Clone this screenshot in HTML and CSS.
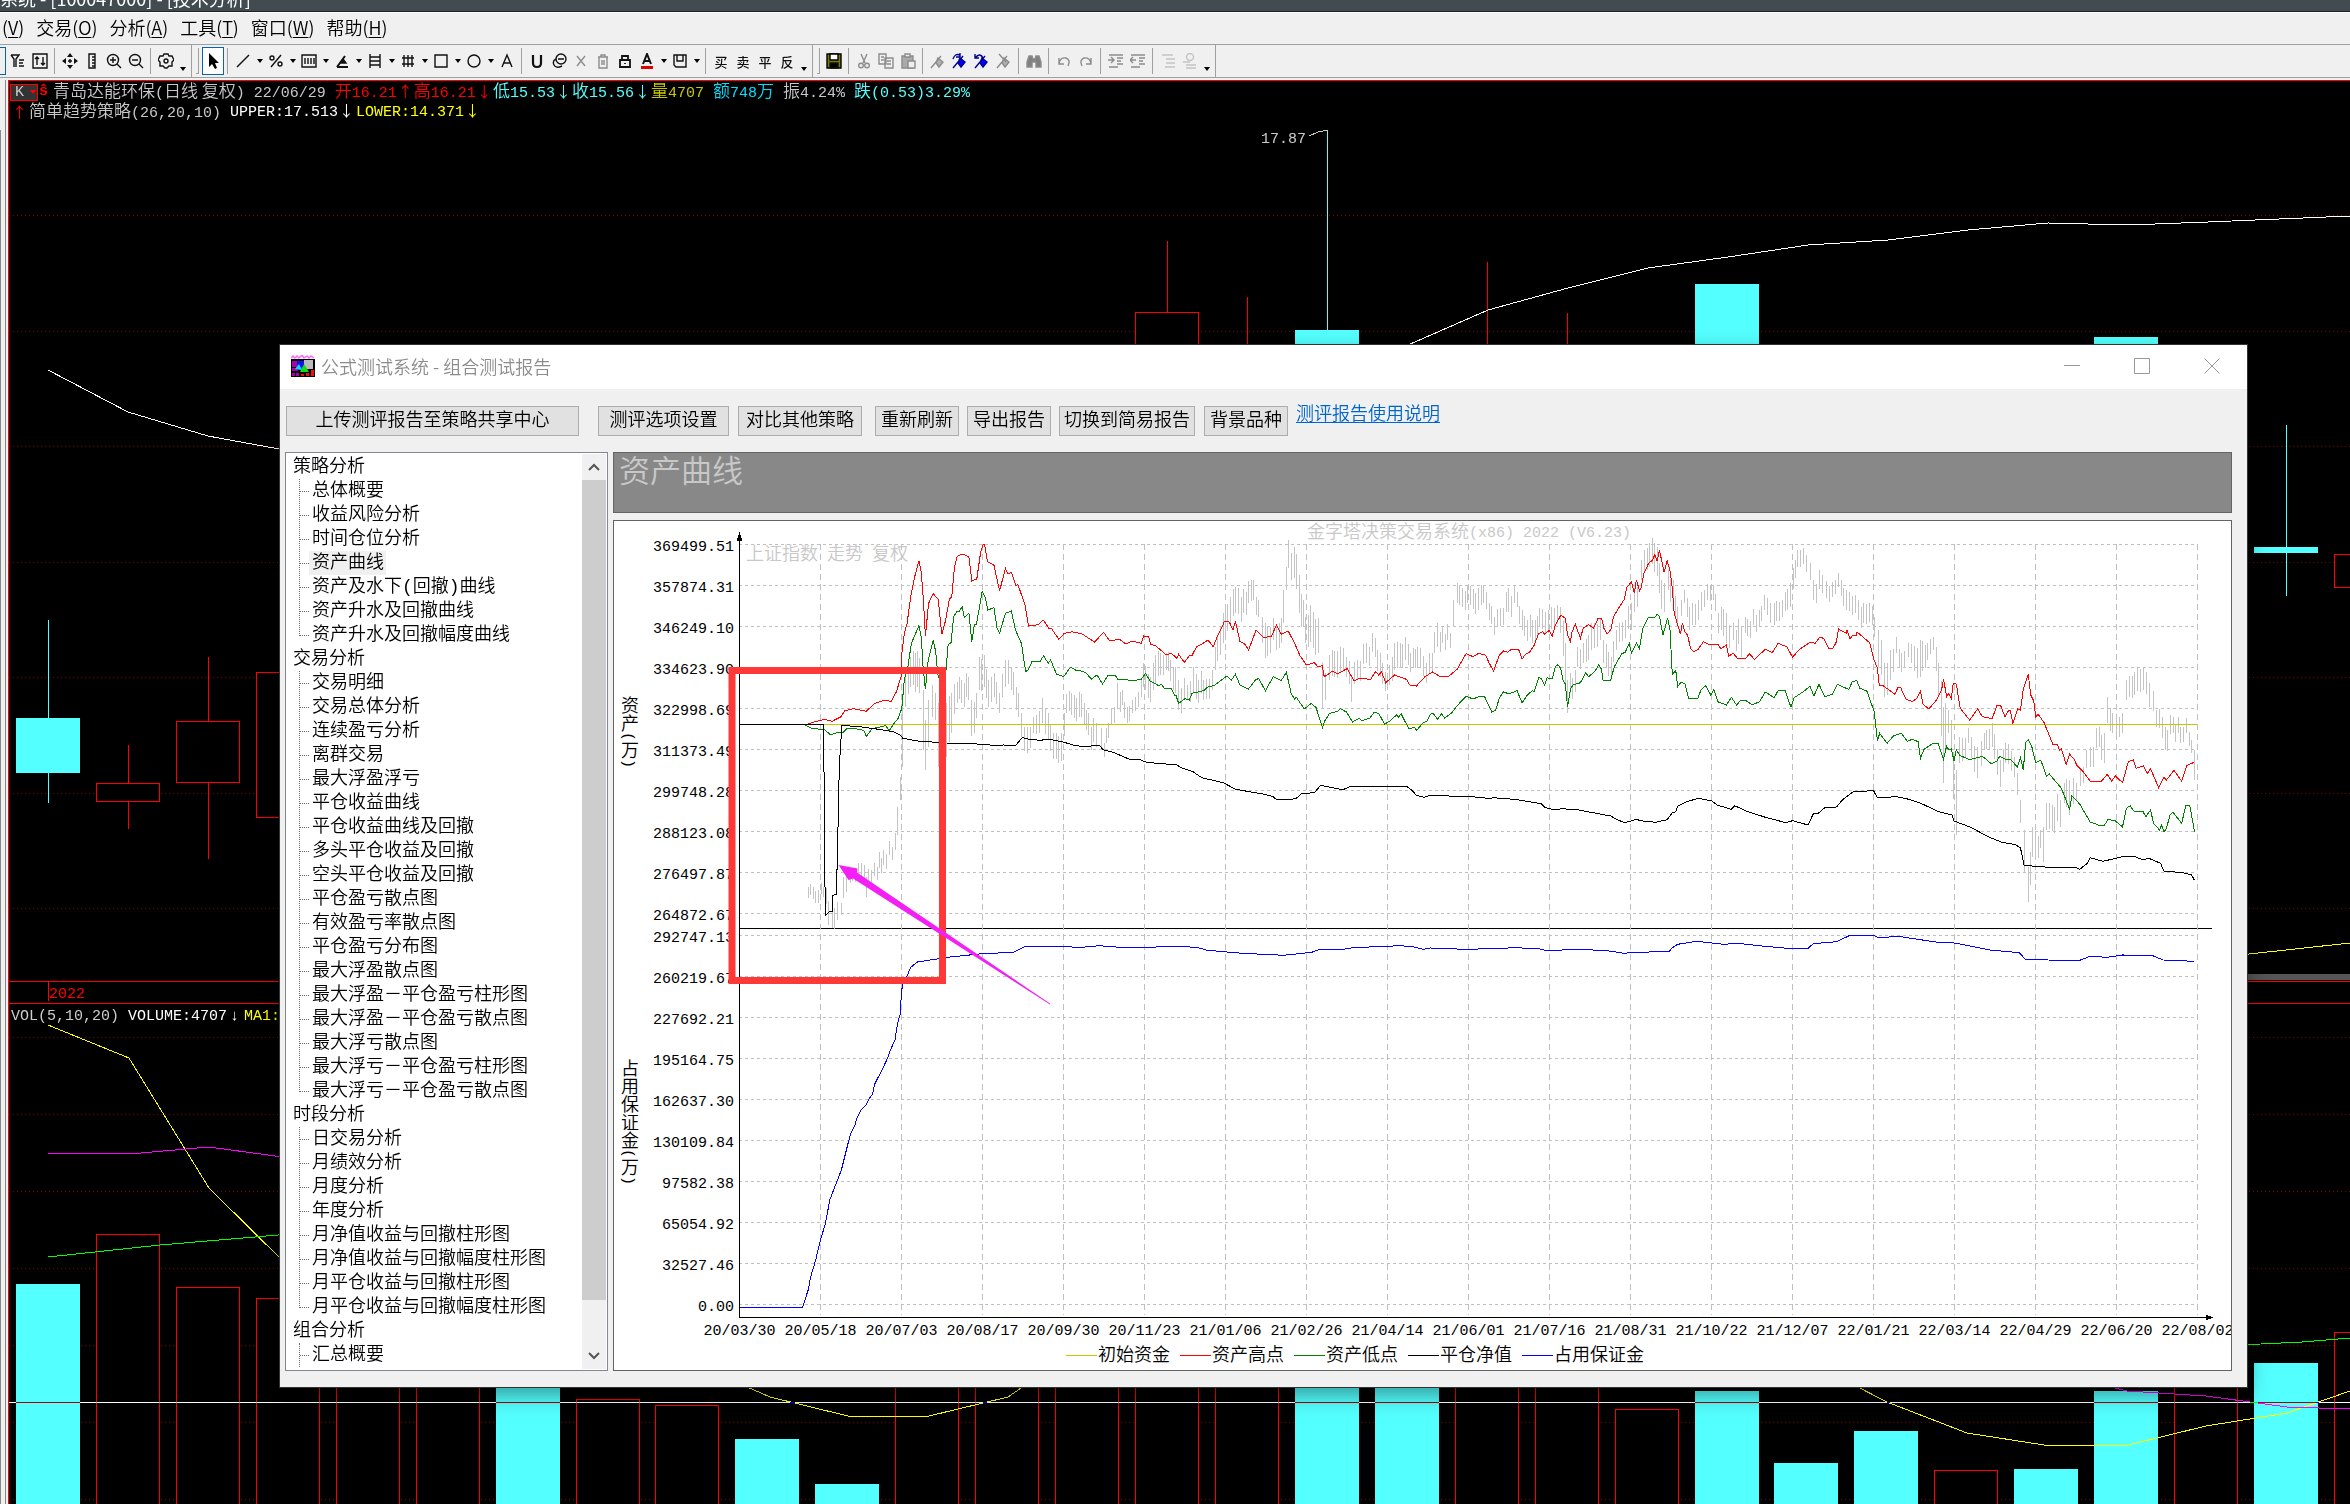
FILE: index.html
```html
<!DOCTYPE html>
<html lang="zh-CN">
<head>
  <meta charset="utf-8">
  <title>公式测试系统 - 组合测试报告</title>
  <link rel="stylesheet" href="styles.css">
</head>
<body>
<div class="app">
  <header class="caption">系统 - [100047000] - [技术分析]</header>
  <nav class="menu">
    <a href="#">(<u>V</u>)</a>
    <a href="#">交易(<u>O</u>)</a>
    <a href="#">分析(<u>A</u>)</a>
    <a href="#">工具(<u>T</u>)</a>
    <a href="#">窗口(<u>W</u>)</a>
    <a href="#">帮助(<u>H</u>)</a>
  </nav>
  <div class="toolbar" id="toolbar"></div>

  <main class="quote">
    <svg class="kline" id="kline" viewBox="0 80 2350 1424" preserveAspectRatio="none"></svg>
    <div class="info">
      <button class="ktype">K<i></i></button><span class="sup">ŝ</span>
      <p><span class="zh">青岛达能环保</span>(<span class="zh">日线 复权</span>) 22/06/29</p>
      <p class="up"><span class="zh">开</span>16.21<span class="ar">↑</span><span class="zh">高</span>16.21<span class="ar">↓</span></p>
      <p class="down"><span class="zh">低</span>15.53<span class="ar">↓</span><span class="zh">收</span>15.56<span class="ar">↓</span></p>
      <p class="vol"><span class="zh">量</span>4707</p>
      <p class="amt"><span class="zh">额</span>748<span class="zh">万</span></p>
      <p><span class="zh">振</span>4.24%</p>
      <p class="down"><span class="zh">跌</span>(0.53)3.29%</p>
    </div>
    <div class="info second">
      <span class="up ar">↑</span>
      <p><span class="zh">简单趋势策略</span>(26,20,10)</p>
      <p class="white">UPPER:17.513<span class="ar">↓</span></p>
      <p class="yellow">LOWER:14.371<span class="ar">↓</span></p>
    </div>
  </main>

  <section class="dialog">
    <div class="dlg-title">
      <svg class="dlg-icon" viewBox="0 0 24 22">
        <path d="M0 3l2-2 2 2 2-2 2 2 3-3 2 3 3-2 2 2 2-2 3 2" fill="none" stroke="#f6f" stroke-width="1.5"/>
        <rect y="4" width="24" height="18" fill="#000"/>
        <path d="M1 6h7v6H1zM1 13h6v3H1zM1 18h3v3H1zM5 18h3v3H5z" fill="#a0a"/>
        <path d="M13 5h9v9h-9z" fill="#bbb"/>
        <path d="M6 6h7v9H6z" fill="#11e"/>
        <path d="M4 14l4-5 3 6z" fill="#0df"/>
        <path d="M9 17l4-8 5 8z" fill="#1d1"/>
        <path d="M10 19h3v2h-3zM15 18h3v3h-3zM20 15h3v6h-3z" fill="#e11"/>
      </svg>
      <span class="dlg-name">公式测试系统 - 组合测试报告</span>
      <button class="win" aria-label="最小化"><svg viewBox="0 0 16 16"><path d="M0 7.500h16"/></svg></button>
      <button class="win" aria-label="最大化"><svg viewBox="0 0 16 16"><path d="M.5 .5h15v15H.5z"/></svg></button>
      <button class="win" aria-label="关闭"><svg viewBox="0 0 16 16"><path d="M.5 .5l15 15M15.5 .5l-15 15"/></svg></button>
    </div>
    <div class="dlg-bar">
      <button class="wide">上传测评报告至策略共享中心</button>
      <button class="b131">测评选项设置</button>
      <button class="b124">对比其他策略</button>
      <button class="b84">重新刷新</button>
      <button class="b84">导出报告</button>
      <button class="b136">切换到简易报告</button>
      <button class="b84">背景品种</button>
      <a href="#">测评报告使用说明</a>
    </div>
    <div class="dlg-body">
      <div class="tree">
        <ul class="nodes">
          <li>策略分析
            <ul>
              <li>总体概要</li><li>收益风险分析</li><li>时间仓位分析</li>
              <li><span class="sel">资产曲线</span></li>
              <li>资产及水下(回撤)曲线</li><li>资产升水及回撤曲线</li><li>资产升水及回撤幅度曲线</li>
            </ul>
          </li>
          <li>交易分析
            <ul>
              <li>交易明细</li><li>交易总体分析</li><li>连续盈亏分析</li><li>离群交易</li>
              <li>最大浮盈浮亏</li><li>平仓收益曲线</li><li>平仓收益曲线及回撤</li>
              <li>多头平仓收益及回撤</li><li>空头平仓收益及回撤</li><li>平仓盈亏散点图</li>
              <li>有效盈亏率散点图</li><li>平仓盈亏分布图</li><li>最大浮盈散点图</li>
              <li>最大浮盈－平仓盈亏柱形图</li><li>最大浮盈－平仓盈亏散点图</li>
              <li>最大浮亏散点图</li><li>最大浮亏－平仓盈亏柱形图</li><li>最大浮亏－平仓盈亏散点图</li>
            </ul>
          </li>
          <li>时段分析
            <ul>
              <li>日交易分析</li><li>月绩效分析</li><li>月度分析</li><li>年度分析</li>
              <li>月净值收益与回撤柱形图</li><li>月净值收益与回撤幅度柱形图</li>
              <li>月平仓收益与回撤柱形图</li><li>月平仓收益与回撤幅度柱形图</li>
            </ul>
          </li>
          <li>组合分析
            <ul class="more"><li>汇总概要</li></ul>
          </li>
        </ul>
        <div class="scroll">
          <button aria-label="向上"><svg viewBox="0 0 12 10"><path d="M1 8l5-5 5 5"/></svg></button>
          <div class="thumb"></div>
          <button aria-label="向下"><svg viewBox="0 0 12 10"><path d="M1 2l5 5 5-5"/></svg></button>
        </div>
      </div>
      <div class="report">
        <h1>资产曲线</h1>
        <div class="plot">
          <svg id="equity" viewBox="614 521 1617 849" preserveAspectRatio="none"></svg>
        </div>
      </div>
    </div>
  </section>

  <svg class="marks" viewBox="0 0 2350 1504" preserveAspectRatio="none">
    <rect x="732" y="670.5" width="210.500" height="310" fill="none" stroke="#ff3838" stroke-width="7"/>
    <path d="M838.600 865L857.500 868.500 857 872.500 1050 1003.500 1050 1004.500 853 878.500 848.500 880z" fill="#f41ff4"/>
  </svg>
</div>
<script src="script.js"></script>
</body>
</html>
```
FILE: styles.css
```css
* { box-sizing: border-box; }

body {
  margin: 0;
  background: #000;
  font-family: "Liberation Mono", "Noto Sans CJK SC", monospace;
  font-size: 18px;
  overflow: hidden;
}

button { font: inherit; color: inherit; padding: 0; border: 0; background: none; }
p, h1, ul { margin: 0; padding: 0; list-style: none; }

.app {
  position: relative;
  display: flex;
  flex-direction: column;
  height: 100vh;
}

/* main window */
.caption {
  display: flex;
  align-items: flex-end;
  height: 12px;
  padding-bottom: 3px;
  overflow: hidden;
  background: #414b50;
  border-bottom: 1px solid #1c2224;
  color: #fff;
  line-height: 20px;
  font-family: "Noto Sans CJK SC", sans-serif;
  white-space: pre;
  flex: none;
}
.menu {
  display: flex;
  gap: 12px;
  height: 32px;
  flex: none;
  align-items: center;
  padding: 0 0 4px 2px;
  background: #f0f0f0;
  border-top: 1px solid #fff;
  font-family: "Noto Sans CJK SC", sans-serif;
  font-weight: 350;
}
.menu a { color: #000; text-decoration: none; white-space: nowrap; }
.menu u { text-underline-offset: 2px; }

.toolbar {
  display: flex;
  height: 36px;
  flex: none;
  background: #f0f0f0;
  border-top: 1px solid #a0a0a0;
}
.band {
  display: flex;
  align-items: center;
  height: 33px;
  padding-right: 2px;
  border-right: 1px solid #a0a0a0;
  border-bottom: 1px solid #a0a0a0;
}
.fill { flex: 1; height: 33px; border-bottom: 1px solid #a0a0a0; }
.grip { width: 3px; height: 26px; margin: 0 3px 0 4px; border-right: 1px solid #a0a0a0; border-bottom: 1px solid #a0a0a0; }
.sep { width: 1px; height: 26px; margin: 0 4px 0 3px; background: #a0a0a0; }
.tool { display: flex; align-items: center; justify-content: center; width: 22px; height: 28px; color: #111; }
.tool svg { width: 16px; height: 16px; fill: none; stroke: currentColor; stroke-width: 1.400; }
.tool.off { color: #8c8c8c; }
.tool.dim { color: #c4c4c4; }
.tool.on { border: 1px solid #0a64ad; background: #fff; }
.tool.cut { width: 6px; margin-right: 1px; border: 1px solid #0a64ad; border-left: 0; }
.tool.zi { font: 500 13px "Noto Sans CJK SC", sans-serif; }
.drop { width: 11px; height: 28px; display: flex; align-items: center; justify-content: center; }
.drop::after { content: ""; border: 3px solid transparent; border-top: 4px solid #000; border-bottom: 0; }
.drop.over { width: 12px; align-items: flex-end; padding-bottom: 4px; }

/* quote area */
.quote {
  position: relative;
  flex: 1;
  padding: 2px 0 0 8px;
  background: #000;
  overflow: hidden;
}
.kline { position: absolute; inset: 0; width: 100%; height: 100%; }
.info {
  position: relative;
  display: flex;
  align-items: center;
  gap: 9px;
  height: 20px;
  padding-left: 2px;
  color: #c8c8c8;
  font-size: 15px;
  line-height: 20px;
  white-space: pre;
}
.info p { flex: none; height: 20px; }
.info .zh { font-family: "Noto Sans CJK SC", sans-serif; font-size: 17px; font-weight: 350; line-height: 16px; }
.info .ar { display: inline-block; width: 17px; text-align: center; font-family: "Noto Sans CJK SC", sans-serif; font-size: 15px; line-height: 16px; }
.info .up + .down { margin-left: -9px; }
.info .down + .vol { margin-left: -9px; }
.info.second { padding-left: 3px; }
.info.second .up { margin-right: -8px; }
.info.second .white { margin-right: -8px; }
.ktype { display: flex; align-items: center; width: 28px; height: 17px; padding-left: 4px; gap: 6px; background: #333; border: 1px solid red; color: #ccc; line-height: 15px; }
.ktype i { border: 3px solid transparent; border-top: 4px solid red; border-bottom: 0; }
.sup { color: red; font-weight: bold; margin: 0 -4px 0 -8px; }
.up { color: red; }
.down { color: #54ffff; }
.vol { color: #c8c800; }
.amt { color: #00e0ff; }
.white { color: #fff; }
.yellow { color: #ff0; }

/* report dialog */
.dialog {
  position: absolute;
  left: 280px;
  top: 345px;
  right: 103px;
  bottom: 117px;
  display: flex;
  flex-direction: column;
  background: #f0f0f0;
  outline: 1px solid #333;
  box-shadow: 0 8px 20px rgba(0, 0, 0, .4);
  font-weight: 350;
}
.dlg-title { display: flex; align-items: center; height: 44px; flex: none; padding: 0 0 2px 11px; background: #fff; color: #8c8c8c; }
.dlg-icon { width: 24px; height: 22px; margin-right: 6px; }
.dlg-name { flex: 1; font-family: "Noto Sans CJK SC", sans-serif; }
.win { display: flex; align-items: center; justify-content: center; width: 70px; height: 44px; }
.win svg { width: 16px; height: 16px; fill: none; stroke: #999; }

.dlg-bar { display: flex; height: 63px; flex: none; padding: 17px 6px 0; }
.dlg-bar button { height: 30px; margin-right: 8px; background: #e1e1e1; border: 1px solid #adadad; white-space: nowrap; line-height: 28px; }
.dlg-bar .wide { width: 293px; margin-right: 19px; }
.dlg-bar .b131 { width: 131px; margin-right: 9px; }
.dlg-bar .b124 { width: 124px; margin-right: 13px; }
.dlg-bar .b84 { width: 84px; }
.dlg-bar .b136 { width: 136px; margin-right: 9px; }
.dlg-bar a { color: #0066cc; height: 19px; line-height: 18px; text-underline-offset: 2px; }

.dlg-body { display: flex; flex: 1; min-height: 0; gap: 5px; padding: 0 15px 16px 5px; }
.tree { display: flex; width: 323px; flex: none; padding: 1px; background: #fff; border: 1px solid #828790; }
.nodes { flex: 1; overflow: hidden; padding: 1px 0 0 6px; line-height: 24px; white-space: nowrap; }
.nodes ul { position: relative; padding-left: 19px; }
.nodes ul::before { content: ""; position: absolute; left: 6px; top: 0; bottom: 11px; border-left: 1px dotted #666; }
.nodes ul.more::before { bottom: 0; }
.nodes ul li { position: relative; height: 24px; }
.nodes ul li::before { content: ""; position: absolute; left: -12px; top: 12px; width: 9px; border-top: 1px dotted #666; }
.sel { display: inline-block; height: 24px; margin-left: -3px; padding: 0 2px 0 3px; background: #f0f0f0; }
.scroll { display: flex; flex-direction: column; width: 24px; background: #f0f0f0; }
.scroll button { display: flex; align-items: center; justify-content: center; height: 26px; flex: none; }
.scroll svg { width: 12px; height: 10px; fill: none; stroke: #555; stroke-width: 2; }
.scroll .thumb { height: 820px; flex: 0 1 auto; background: #cdcdcd; }
.scroll button:last-child { margin-top: auto; }

.report { display: flex; flex-direction: column; flex: 1; gap: 7px; min-width: 0; }
.report h1 { height: 61px; flex: none; padding: 3px 5px; background: #888; border: 1px solid #646464; color: #c8c8c8; font-size: 31px; line-height: 36px; font-weight: 350; }
.plot { flex: 1; min-height: 0; background: #fff; border: 1px solid #646464; }
.plot svg { display: block; width: 100%; height: 100%; }
svg text { font-size: 15px; dominant-baseline: central; white-space: pre; }
svg .zh { font-size: 18px; }
.kline, .plot svg { shape-rendering: crispEdges; }
.grid { stroke: #c0c0c0; stroke-dasharray: 3 3; }
.grid.v { stroke-dasharray: 6 4; }
.vert { writing-mode: vertical-rl; }
.line { fill: none; stroke-width: 1; }
.cross { mix-blend-mode: difference; }

/* hand drawn callout */
.marks { position: absolute; inset: 0; width: 100%; height: 100%; pointer-events: none; }
```
FILE: script.js
```js
// ---------- toolbar ----------
var flag = '<path d="M1 15L11 3M8 5l5 4-4 5-3-4z"';
var icons = {
  filter: '<path d="M1 2h8L6 6v8M4 14V6L1 2M9 7h5M9 10h4M9 13h5"/>',
  updown: '<path d="M1 1h14v14H1zM5 12V4M3 6l2-2 2 2M11 4v8M9 10l2 2 2-2"/>',
  move: '<path d="M8 0l3 4H5zM8 16l3-4H5zM0 8l4-3v6zM16 8l-4-3v6z" fill="currentColor" stroke="none"/><path d="M6 8h4M8 6v4"/>',
  ruler: '<path d="M5 1h6v14H5zM8 4h3M8 7h3M8 10h3M8 13h3"/>',
  zin: '<circle cx="7" cy="7" r="5.5"/><path d="M4 7h6M7 4v6M11 11l4 4"/>',
  zout: '<circle cx="7" cy="7" r="5.5"/><path d="M4 7h6M11 11l4 4"/>',
  gear: '<path d="M6 1h4l1 2 3 0 2 4-2 2 0 4-3 0-2 2H7l-2-2-3 0 0-4L0 7l2-4h3z"/><circle cx="8" cy="8" r="2"/>',
  cursor: '<path d="M4 0v14l3-3 3 5 2-1-2-5h4z" fill="#000" stroke="none"/>',
  line: '<path d="M2 14L14 2"/>',
  pct: '<path d="M3 14L13 2"/><circle cx="4" cy="5" r="2"/><circle cx="12" cy="11" r="2"/>',
  bars: '<path d="M1 2h14v12H1zM4 5v6M7 5v6M10 5v6M13 5v6"/>',
  angle: '<path d="M3 14h11M3 14L11 3" stroke-width="2"/><path d="M6 10l6 0-3-4" fill="currentColor"/>',
  rows: '<path d="M3 1v14M13 1v14M3 4h10M3 8h10M3 12h10"/>',
  hash: '<path d="M4 2v12M8 2v12M12 2v12M2 5h12M2 11h12"/>',
  box: '<path d="M2 2h12v12H2z"/>',
  circ: '<circle cx="8" cy="8" r="6"/>',
  A: '<path d="M3 14L8 2l5 12M5 10h6"/>',
  magnet: '<path d="M4 2v8q0 4 4 4t4-4V2" stroke-width="2.2"/>',
  rings: '<circle cx="10" cy="6" r="5"/><path d="M7 6h6M11 13q-6 3-8-1-2-4 2-6"/>',
  x: '<path d="M4 3l8 10M12 3L4 13"/>',
  trash: '<path d="M3 4h10M6 4V2h4v2M4 4v11h8V4M7 7v5M9 7v5"/>',
  lock: '<path d="M3 7h10v7H3zM5 7V3h6v4M8 10v1" stroke-width="1.8"/>',
  fontc: '<path d="M4 11L8 1l4 10M6 8h4" stroke-width="2"/><path d="M2 14.500h12" stroke="#e00000" stroke-width="3"/>',
  disk: '<path d="M2 2h12v12H4l-2-2zM5 2v6h6V2"/>',
  save: '<path d="M1 1h14v14H1z" fill="#7a7a00" stroke="#000"/><path d="M4 1h8v6H4z" fill="#fff" stroke="#000"/><path d="M4 10h8v5H4z" fill="#000"/>',
  scissors: '<path d="M5 1l4 9M11 1L7 10"/><circle cx="5" cy="12.5" r="2.3"/><circle cx="11" cy="12.5" r="2.3"/>',
  copy: '<path d="M1 1h7v10H1zM3 4h3M3 7h3M7 5h8v10H7zM9 8h4M9 11h4"/>',
  paste: '<path d="M2 3h11v12H2z" fill="#aaa"/><path d="M5 1h5v3H5zM8 8h7v7H8z" fill="#eee"/>',
  flag0: flag + ' fill="#b0b0b0"/>',
  flagn: flag + ' fill="#00f" stroke="#000090"/><path d="M1 6q2-6 7-4M8 0v4H4" stroke="#000090"/>',
  flagp: flag + ' fill="#00f" stroke="#000090"/><path d="M1 1v4h4M1 5q5-6 8 0" stroke="#000090"/>',
  flagx: flag + ' fill="#b0b0b0"/><path d="M3 1l7 8"/>',
  find: '<path d="M3 3h3l1 3h2l1-3h3l2 6v5h-5V9H6v5H1V9z" fill="#808080"/>',
  undo: '<path d="M3 5v6h5M3 11q1-7 7-6 5 2 2 8"/>',
  redo: '<path d="M13 5v6H8M13 11q-1-7-7-6-5 2-2 8"/>',
  ind: '<path d="M1 2h14M9 5h6M9 8h4M9 11h6M1 14h9M0 7h6M3 4l3 3-3 3"/>',
  outd: '<path d="M1 2h14M9 5h6M9 8h4M9 11h6M1 14h9M0 7h6M3 4L0 7l3 3"/>',
  list: '<path d="M2 2h11M6 6h9M6 10h9M5 14h10"/>',
  seek: '<circle cx="8" cy="4" r="3.5"/><path d="M1 9h7M4 12h10M4 15h10"/>'
};
// "|" separator, "v" drop arrow, "V" overflow arrow, a prefix of - or = greys the tool out
var bands = [
  'cut filter updown | move ruler zin zout | gear V',
  '+cursor | line v pct v bars v angle v rows v hash v box v circ v A | magnet rings -x -trash lock fontc v disk v | 买 卖 平 反 V',
  'save | -scissors -copy -paste | -flag0 flagn flagp -flagx | -find | -undo -redo | -ind -outd | =list =seek V'
];
document.getElementById('toolbar').innerHTML = bands.map(function (band, n) {
  return '<div class="band">' + (n ? '<span class="grip"></span>' : '') + band.split(' ').map(function (t) {
    if (t == '|') return '<span class="sep"></span>';
    if (t == 'v') return '<button class="drop"></button>';
    if (t == 'V') return '<button class="drop over"></button>';
    if (t == 'cut') return '<button class="tool cut"></button>';
    var cls = { '-': ' off', '=': ' dim', '+': ' on' }[t[0]] || '';
    if (cls) t = t.slice(1);
    if (!icons[t]) return '<button class="tool zi">' + t + '</button>';
    return '<button class="tool' + cls + '"><svg viewBox="0 0 16 16">' + icons[t] + '</svg></button>';
  }).join('') + '</div>';
}).join('') + '<div class="fill"></div>';

function hline(x1, x2, y, attr) { return '<path d="M' + x1 + ' ' + y + 'H' + x2 + '" ' + attr + '/>'; }
function vline(x, y1, y2, attr) { return '<path d="M' + x + ' ' + y1 + 'V' + y2 + '" ' + attr + '/>'; }
function poly(pts, color) { return '<polyline class="line" points="' + pts + '" stroke="' + color + '"/>'; }

// ---------- daily candles and volume ----------
var CY = '#54ffff', s = '<rect y="80" width="2350" height="1424" fill="#000"/>', i;
function barX(n) { return Math.round(16 + n * 79.93); }
for (i = 0; i < 7; i++) s += hline(9, 2350, 215.5 + i * 115.5, 'stroke="#800000" stroke-dasharray="1 3"');
for (i = 0; i < 7; i++) s += hline(9, 2350, 1037.5 + i * 77, 'stroke="#800000" stroke-dasharray="1 3"');
s += '<rect y="80" width="8" height="1424" fill="#f0f0f0"/>' + vline(.5, 130, 1504, 'stroke="#888"') + vline(5.5, 80, 1504, 'stroke="#888"');
s += hline(8, 2350, 80.500, 'stroke="#f00"') + vline(8.5, 80, 1504, 'stroke="#f00"');
s += '<rect x="2247" y="974" width="103" height="6" fill="#555"/>';
s += hline(8, 2350, 981.5, 'stroke="#f00"') + hline(8, 2350, 1003.5, 'stroke="#f00"') + vline(48.5, 981, 1001, 'stroke="#f00"');
// index, up/down, high, top, bottom, low
[[0, 0, 620, 718, 772, 803], [1, 1, 745, 783, 801, 829], [2, 1, 657, 721, 782, 859], [3, 1, 672, 672, 817, 817],
 [14, 1, 241, 312, 400, 400], [15, 1, 297, 400, 420, 420], [16, 0, 130, 330, 400, 400], [18, 1, 262, 400, 420, 420],
 [19, 1, 313, 400, 420, 420], [21, 0, 284, 284, 400, 400], [26, 0, 337, 337, 400, 400], [28, 0, 425, 547, 552, 596], [29, 1, 554, 554, 587, 587]
].forEach(function (c) {
  var x = barX(c[0]), col = c[1] ? '#f00' : CY;
  s += vline(x + 32.5, c[2], c[3], 'stroke="' + col + '"') + vline(x + 32.5, c[4], c[5], 'stroke="' + col + '"');
  s += '<rect x="' + (x + .5) + '" y="' + (c[3] + .5) + '" width="63" height="' + (c[4] - c[3]) + '" stroke="' + col + '" fill="' + (c[1] ? '#000' : CY) + '"/>';
});
// volume tops, negative = rising day
[1284, -1234, -1287, -1298, -1320, -1387, 1370, -1399, -1405, 1439, 1484, -1330, -1330, -1330, -1330, -1330, 1340, 1340,
 -1340, -1340, -1409, 1391, 1463, 1431, -1470, 1469, 1391, -1350, 1363, -1332].forEach(function (v, n) {
  var x = barX(n);
  if (v > 0) s += '<rect x="' + x + '" y="' + v + '" width="64" height="' + (1504 - v) + '" fill="' + CY + '"/>';
  else s += '<path d="M' + (x + .5) + ' 1504V' + (-v + .5) + 'h63V1504" fill="#000" stroke="#f00"/>';
});
s += poly('48,370 128,412 208,436 290,451', '#fff');
s += poly('1380,357 1408,345 1488,310 1568,288 1648,268 1728,257 1808,245 1888,240 1968,230 2048,223 2128,225 2208,222 2350,216', '#fff');
s += poly('48,1025 129,1058 209,1188 290,1268', '#ff0') + poly('48,1153.5 135,1153.5 209,1147 290,1158', '#f0f') + poly('48,1257 160,1245 290,1234', '#0f0');
s += poly('745,1386 770,1397 848,1416 929,1416 1008,1397 1024,1386', '#ff0');
s += poly('1850,1383 1887,1402 1967,1433 2044,1445 2128,1445 2206,1426 2287,1413 2350,1391', '#ff0');
s += poly('2100,1384 2127,1391 2206,1396 2287,1407 2350,1409', '#f0f') + poly('2240,1345 2302,1342 2350,1338', '#0f0');
s += poly('2240,955 2350,943', '#ff0') + poly('1309,136 1318,132 1328,130', '#ccc');
s += '<text x="1261" y="139" fill="#ccc">17.87</text><text x="49" y="994" fill="#f00">2022</text>';
s += '<text x="11" y="1016" fill="#ccc">VOL(5,10,20)</text><text x="128" y="1016" fill="#fff">VOLUME:4707</text>';
s += '<text x="230" y="1016" fill="#fff">↓</text><text x="244" y="1016" fill="#ff0">MA1:</text>';
s += hline(9, 2350, 1402.500, 'stroke="#fff" class="cross"');
document.getElementById('kline').innerHTML = s;

// ---------- equity curve ----------
// every curve is kept in three pieces, each with its own origin and x step
var parts = [[600, 2.8], [1100, 2.8], [1640, 2.57]];
function px(p, x) { return parts[p][0] + x / parts[p][1]; }
function py(y) { return 500 + y / 3; }
function curve(list, color) {
  return poly(list.map(function (str, p) {
    return str.split(' ').map(function (q) {
      q = q.split(',');
      return px(p, +q[0]).toFixed(1) + ',' + py(+q[1]).toFixed(1);
    }).join(' ');
  }).join(' '), color);
}
var assetHigh = [
 '390,673 580,673 600,666 628,658 650,664 675,650 685,632 710,626 745,634 770,610 795,601 815,604 830,575 843,530 845,460 852,400 860,370 870,290 880,235 893,182 900,220 906,310 911,408 920,310 933,281 947,298 957,403 968,360 978,298 985,290 992,205 1000,170 1014,162 1033,170 1041,243 1055,237 1066,155 1072,135 1077,134 1085,185 1103,195 1119,273 1135,205 1142,222 1152,217 1165,258 1170,253 1182,290 1190,315 1200,378 1228,374 1241,360 1257,385 1265,387 1285,418 1300,400 1322,395 1350,402 1385,426',
 '10,397 27,422 55,418 72,432 90,423 115,430 122,408 136,410 142,433 155,437 185,464 200,460 215,475 220,463 236,487 250,467 258,466 270,441 285,433 302,420 317,440 330,405 345,375 348,364 362,366 372,390 379,364 392,425 405,432 416,450 437,390 457,412 480,410 494,375 508,403 527,393 545,430 560,467 578,495 600,488 610,500 622,497 628,531 650,514 665,521 692,506 712,543 725,535 758,538 772,514 780,525 788,515 800,548 825,525 845,533 858,538 868,556 886,558 910,530 931,516 950,528 975,530 1000,508 1025,461 1045,470 1060,460 1080,466 1090,490 1102,514 1118,465 1130,453 1142,457 1150,449 1172,448 1182,477 1192,462 1203,457 1215,437 1228,401 1240,395 1245,403 1258,391 1266,409 1275,375 1290,346 1303,355 1309,405 1317,424 1322,395 1331,373 1345,415 1353,385 1368,374 1382,385 1394,356 1405,357 1411,385 1420,401 1430,390 1438,350 1450,328 1468,298 1475,262 1488,246 1496,280 1502,240 1511,273',
 '2,267 10,220 22,190 33,180 38,163 44,182 50,151 62,217 70,182 77,212 83,265 88,340 97,375 104,403 109,368 115,395 122,405 130,445 138,455 150,447 163,425 180,435 200,432 208,447 222,435 228,468 240,460 250,475 273,474 281,461 294,478 322,448 340,458 355,430 378,441 392,472 410,448 437,427 450,430 462,412 472,415 485,445 495,447 505,425 510,387 530,400 532,390 540,417 547,405 555,407 558,396 575,413 590,428 600,475 610,505 615,556 625,557 655,583 663,562 670,563 683,597 700,605 713,593 721,573 727,612 742,627 762,600 775,570 780,536 788,590 792,580 800,595 805,550 813,552 823,625 847,660 868,627 880,650 905,656 917,617 927,617 938,650 947,632 952,633 958,670 971,627 978,630 985,567 998,523 1004,585 1012,603 1017,652 1023,643 1038,667 1062,735 1072,732 1078,750 1083,746 1095,793 1104,762 1117,780 1122,795 1137,812 1157,843 1185,845 1201,823 1212,843 1222,828 1240,848 1255,785 1268,779 1275,805 1294,798 1304,820 1312,806 1333,863 1346,832 1353,840 1372,811 1392,843 1405,797 1424,787'];
var assetLow = [
 '390,673 570,673 590,684 630,690 645,704 670,696 680,698 690,687 710,685 738,691 746,709 762,686 800,677 810,692 822,672 835,655 845,625 852,540 862,500 872,430 893,377 900,415 904,495 911,568 919,480 933,420 940,455 946,525 958,560 968,520 975,433 983,428 990,350 1000,333 1005,335 1014,320 1020,352 1033,340 1041,425 1048,375 1054,374 1070,275 1078,290 1086,330 1103,323 1112,385 1119,400 1135,340 1152,333 1163,390 1180,430 1192,515 1200,508 1210,484 1232,485 1242,467 1255,490 1262,480 1278,522 1298,530 1317,502 1333,511 1340,510 1360,518 1376,537 1392,525',
 '7,552 22,527 43,526 50,540 72,538 85,543 115,538 128,520 140,543 165,557 172,553 180,565 200,566 208,585 213,587 220,610 238,596 250,600 258,580 290,572 300,562 320,556 355,528 368,540 379,523 392,555 415,568 437,538 445,536 463,573 485,530 507,542 522,517 535,580 545,597 550,592 572,627 592,610 605,623 623,683 628,665 643,640 665,634 673,626 690,636 707,666 725,655 733,662 755,655 768,637 780,640 797,672 812,663 830,645 836,652 843,641 865,687 880,682 887,691 903,670 915,664 925,643 933,640 945,657 957,641 965,655 985,638 1000,617 1025,589 1045,597 1065,588 1076,588 1097,636 1108,630 1118,595 1130,575 1145,582 1168,572 1182,609 1195,587 1210,572 1216,575 1228,533 1235,535 1245,556 1252,533 1266,537 1275,500 1282,494 1290,505 1296,540 1303,552 1309,620 1318,565 1325,555 1345,548 1360,518 1368,530 1385,515 1397,494 1404,508 1409,543 1430,540 1440,500 1462,460 1470,458 1482,430 1488,460 1502,430 1510,445',
 '0,435 8,382 22,352 38,352 44,343 50,350 59,406 71,353 77,390 83,523 92,512 97,560 105,547 116,552 125,595 148,597 157,569 169,557 182,585 190,569 201,606 222,615 235,592 248,615 258,602 273,602 288,615 307,605 322,576 345,593 355,572 373,572 388,622 396,593 420,575 437,559 447,588 460,553 475,590 495,582 507,553 520,560 537,568 545,546 557,541 565,565 583,573 592,603 602,635 610,722 616,700 635,730 652,707 672,700 687,724 700,718 715,725 721,775 730,748 752,731 767,731 780,778 788,738 794,750 800,746 807,783 813,750 822,766 847,779 880,769 903,791 917,783 925,769 942,779 952,778 970,801 978,773 985,810 991,728 998,720 1007,740 1017,788 1030,780 1045,830 1052,822 1083,865 1104,928 1110,888 1130,912 1157,966 1180,976 1193,977 1203,958 1222,963 1240,981 1250,925 1260,917 1268,933 1293,935 1300,950 1312,930 1320,970 1335,990 1340,975 1347,995 1353,985 1362,945 1370,937 1392,970 1403,917 1413,917 1418,950 1425,995'];
var netValue = [
 '390,673 626,673 626,815 629,817 629,1110 632,1246 642,1236 650,1234 652,1187 662,1182 666,1000 670,800 677,677 720,679 780,688 820,695 840,704 848,715 890,723 970,729 1080,733 1105,737 1130,735 1163,737 1183,712 1190,716 1230,721 1260,718 1300,727 1330,737 1370,740 1380,735 1400,738',
 '8,749 40,758 85,779 110,778 130,787 215,795 225,802 260,815 285,833 345,848 380,868 460,883 485,890 495,900 530,899 550,895 563,881 600,878 618,856 640,861 680,869 703,859 858,859 875,872 885,886 908,892 925,886 1030,890 1070,892 1090,897 1100,893 1160,898 1235,911 1245,922 1270,929 1295,926 1340,930 1430,948 1450,960 1470,968 1503,958 1512,962',
 '40,967 70,959 83,938 92,935 97,918 120,905 150,895 185,903 198,915 235,928 243,917 275,934 320,951 375,968 392,962 432,975 445,942 458,940 475,923 505,921 520,900 548,875 600,872 610,893 660,890 685,896 720,909 765,934 802,945 807,963 850,982 895,1010 930,1027 965,1034 978,1044 987,1095 1020,1100 1060,1102 1122,1104 1130,1108 1150,1090 1157,1073 1190,1084 1240,1070 1272,1070 1290,1078 1310,1076 1338,1090 1346,1113 1395,1118 1417,1124 1425,1141'];
var margin = [
 '390,2422 567,2422 583,2370 590,2330 604,2280 617,2220 630,2175 644,2098 663,2045 676,2010 697,1920 703,1898 714,1875 720,1852 731,1830 746,1813 754,1795 763,1783 769,1753 794,1700 806,1672 811,1655 826,1620 833,1570 840,1545 844,1485 847,1450 860,1428 870,1402 889,1386 943,1377 971,1372 1071,1361 1157,1357 1189,1340 1293,1340 1350,1342 1397,1337',
 '83,1344 208,1339 271,1342 300,1351 400,1360 514,1366 593,1357 612,1349 672,1350 707,1343 840,1337 875,1340 905,1348 925,1344 1020,1348 1100,1346 1160,1343 1230,1346 1250,1352 1340,1348 1420,1352 1468,1360 1500,1356 1512,1357',
 '0,1357 75,1354 83,1343 97,1333 145,1324 215,1333 250,1330 320,1339 380,1345 432,1345 445,1331 505,1325 540,1306 600,1306 610,1312 670,1310 760,1326 795,1326 900,1350 975,1358 990,1378 1075,1381 1130,1381 1157,1369 1200,1372 1240,1365 1315,1366 1345,1380 1424,1384'];
// index bars: x, high, low
var index = [
 [583,1160,1195,612,1170,1208,626,1162,1190,640,1203,1275,650,1210,1284,665,1205,1260,675,1210,1245,682,1130,1195,700,1110,1150,725,1090,1130,740,1095,1140,746,1130,1190,760,1110,1150,776,1100,1140,783,1055,1105,795,1050,1095,820,1040,1080,828,1000,1050,834,920,1005,842,830,900,848,600,800,856,520,620,870,470,560,883,460,575,895,475,580,905,570,750,911,660,810,920,600,740,930,555,650,940,580,660,948,610,800,960,620,780,970,610,770,985,580,700,1000,545,610,1020,550,620,1033,530,600,1041,600,708,1054,580,655,1062,470,570,1076,465,560,1088,540,620,1104,520,590,1118,580,640,1135,480,560,1152,505,570,1165,560,630,1180,640,710,1198,680,758,1215,650,700,1240,595,670,1255,640,720,1270,700,776,1292,700,782,1307,583,640,1342,575,650,1362,630,690,1375,680,750,1390,670,740],
 [5,685,750,12,730,772,25,670,715,40,620,670,50,550,625,62,570,615,76,620,670,90,600,640,108,575,620,122,490,560,142,530,605,155,465,550,185,460,510,205,500,570,220,540,630,245,555,600,262,500,580,290,540,600,316,510,570,322,440,510,345,340,430,365,290,370,380,260,340,395,290,365,410,275,345,430,240,300,445,300,350,463,370,475,485,355,420,495,375,450,508,355,430,514,270,370,522,200,270,527,120,205,536,160,240,545,140,235,558,225,340,570,300,380,576,350,430,590,315,425,612,355,460,622,490,625,632,520,600,643,465,540,672,440,520,690,470,530,705,530,605,722,480,540,745,430,490,770,415,470,785,460,530,805,520,570,825,430,510,855,410,480,870,460,515,890,440,500,915,490,550,930,460,520,945,370,440,960,380,430,980,400,445,990,300,380,1000,250,310,1030,255,310,1060,265,330,1075,255,310,1090,310,360,1105,350,405,1130,325,375,1145,265,335,1168,275,320,1182,330,390,1205,345,410,1218,360,430,1230,325,380,1255,330,400,1280,315,370,1290,320,400,1303,430,560,1309,540,640,1318,520,580,1330,510,575,1338,440,500,1355,430,490,1375,370,450,1400,355,420,1411,420,490,1432,470,540,1445,390,450,1470,360,415,1488,310,390,1505,260,320],
 [5,180,240,25,130,200,38,130,215,50,190,280,62,250,335,72,210,270,85,240,320,97,320,380,115,270,310,128,320,390,150,300,360,165,270,320,188,255,300,202,340,400,222,340,430,240,370,420,261,380,470,270,350,400,300,345,395,320,285,330,345,310,375,365,300,350,388,250,320,400,180,235,412,150,200,437,190,240,447,240,300,470,225,280,495,245,290,510,220,260,530,270,330,555,285,340,568,320,385,590,310,365,603,350,410,612,390,500,628,490,590,645,450,540,660,410,460,672,460,515,690,430,470,720,420,530,740,430,480,755,410,450,768,490,590,780,620,850,792,630,700,800,660,750,813,810,1005,822,710,790,845,685,730,868,740,835,885,700,750,905,670,740,927,780,860,940,730,790,963,770,830,978,900,970,987,990,1120,998,1100,1205,1010,980,1070,1030,990,1045,1037,980,1085,1045,910,990,1080,900,980,1090,850,910,1104,840,945,1122,850,900,1140,800,850,1157,740,800,1180,680,740,1193,700,790,1201,590,670,1215,640,700,1240,640,700,1250,540,600,1272,515,585,1294,505,570,1310,550,620,1327,630,680,1350,680,750,1370,650,700,1390,680,730,1405,655,700,1418,720,760,1426,750,840]];

s = '';
var top10 = ['369499.51', '357874.31', '346249.10', '334623.90', '322998.69', '311373.49', '299748.28', '288123.08', '276497.87', '264872.67'];
var low10 = ['292747.13', '260219.67', '227692.21', '195164.75', '162637.30', '130109.84', '97582.38', '65054.92', '32527.46', '0.00'];
var days = '20/03/30 20/05/18 20/07/03 20/08/17 20/09/30 20/11/23 21/01/06 21/02/26 21/04/14 21/06/01 21/07/16 21/08/31 21/10/22 21/12/07 22/01/21 22/03/14 22/04/29 22/06/20 22/08/02'.split(' ');
s += hline(739, 2212, 928.5, 'stroke="#000"');
top10.concat(low10).forEach(function (t, n) {
  var y = n < 10 ? 544.5 + n * 41 : 935.5 + (n - 10) * 41;
  s += hline(739, 2197, y, 'class="grid"') + '<text x="734" y="' + (y + 2.5) + '" text-anchor="end">' + t + '</text>';
});
days.forEach(function (t, n) {
  var x = 739.5 + n * 81;
  if (n) s += vline(x, 544, 1315, 'class="grid v"');
  s += '<text x="' + x + '" y="1331" text-anchor="middle">' + t + '</text>';
});
s += '<text x="1307" y="533" fill="#c8c8c8"><tspan class="zh">金字塔决策交易系统</tspan>(x86) 2022 (V6.23)</text>';
s += '<text x="746" y="555" fill="#c8c8c8"><tspan class="zh">上证指数</tspan> <tspan class="zh">走势</tspan> <tspan class="zh">复权</tspan></text>';
s += '<text class="vert" x="627" y="696"><tspan class="zh">资产</tspan>(<tspan class="zh">万</tspan>)</text>';
s += '<text class="vert" x="627" y="1059"><tspan class="zh">占用保证金</tspan>(<tspan class="zh">万</tspan>)</text>';

// fill the gaps between the known index bars
var d = '';
index.forEach(function (a, p) {
  for (var k = 0; k < a.length; k += 3) {
    var last = k + 3 >= a.length, gap = last ? 1 : a[k + 3] - a[k], n = Math.max(1, Math.round(gap / 7.500));
    for (var j = 0; j < n; j++) {
      var f = j / n, w = j ? ((k * 7 + j * 13) % 11 - 5) * 4 : 0;
      var hi = last ? a[k + 1] : a[k + 1] + (a[k + 4] - a[k + 1]) * f + w;
      var lo = last ? a[k + 2] : a[k + 2] + (a[k + 5] - a[k + 2]) * f + w;
      d += 'M' + (Math.floor(px(p, a[k] + gap * f)) + .5) + ' ' + py(hi).toFixed(1) + 'V' + py(lo).toFixed(1);
    }
  }
});
s += '<path d="' + d + '" stroke="#c4c4c4"/>';
s += hline(739, 2197, 724.5, 'stroke="#c8c800"');
s += curve(assetHigh, '#f00') + curve(assetLow, '#008000') + curve(netValue, '#000') + curve(margin, '#00f');
s += vline(739.5, 536, 1317, 'stroke="#000"') + '<path d="M739.500 532l3 9h-6z"/>';
s += hline(739, 2210, 1317.5, 'stroke="#000"') + '<path d="M2213 1317.500l-7-3v6z"/>';
[[1066, '初始资金', '#c8c800'], [1180, '资产高点', '#f00'], [1294, '资产低点', '#008000'], [1408, '平仓净值', '#000'], [1522, '占用保证金', '#00f']].forEach(function (l) {
  s += hline(l[0], l[0] + 31, 1355.5, 'stroke="' + l[2] + '"') + '<text class="zh" x="' + (l[0] + 32) + '" y="1356">' + l[1] + '</text>';
});
document.getElementById('equity').innerHTML = s;
```
